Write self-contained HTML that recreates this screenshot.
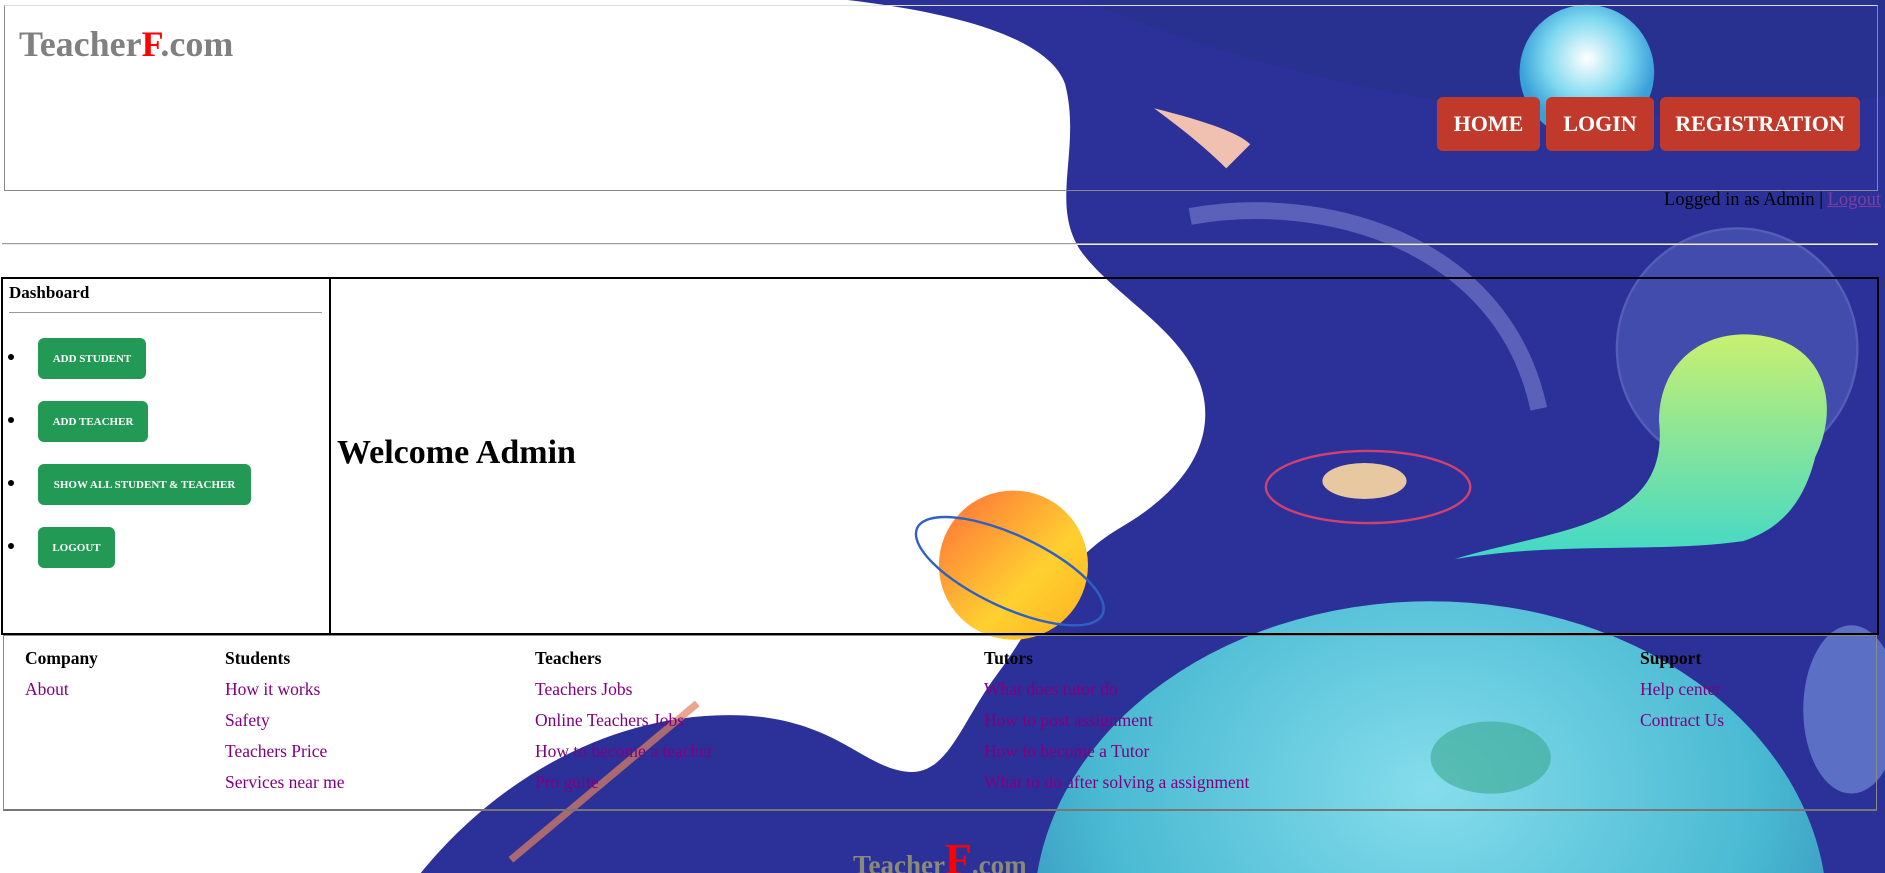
<!DOCTYPE html>
<html><head><meta charset="utf-8"><style>
*{box-sizing:border-box}
html,body{margin:0;width:1885px;height:873px;overflow:hidden}
body{position:relative;font-family:"Liberation Serif",serif;background:#fff}
#bg{position:absolute;left:0;top:0;width:1885px;height:873px;z-index:0}
.a{position:absolute;z-index:1}
.hdr{left:4px;top:5px;width:1874px;height:186px;border:1px solid #8a8a8a;border-top-color:#ddd}
.logo{left:19px;top:23px;font-size:36px;font-weight:bold;color:#808080;white-space:nowrap}
.logo span{color:#f00}
.nb{top:97px;height:54px;background:#c0392b;color:#fff;font-weight:bold;font-size:22px;border-radius:6px;display:flex;align-items:center;justify-content:center}
.logged{right:4px;top:190px;font-size:18.5px;color:#000}
.logged a{color:#7a3fa0;text-decoration:underline}
.hr{left:2px;width:1876px;top:243px;height:2px;border-top:1px solid #9a9a9a;border-bottom:1px solid #eee}
.tbl{left:1px;top:277px;width:1878px;height:358px;border:2px solid #000}
.div{left:329px;top:277px;width:2px;height:358px;background:#000}
.dash{left:9px;top:283px;font-size:17px;font-weight:bold}
.dhr{left:9px;top:312px;width:313px;height:1px;background:#999}
.gb{left:38px;height:41px;background:#229954;color:#fff;font-weight:bold;font-size:11px;border-radius:6px;display:flex;align-items:center;justify-content:center}
.dot{left:8px;width:6px;height:6px;border-radius:50%;background:#000}
.wel{left:337px;top:434px;font-size:34px;font-weight:bold}
.ft{left:3px;top:635px;width:1874px;height:176px;border:1px solid #8a8a8a;border-bottom:2px solid #777}
.fc{font-size:17.5px;line-height:31px;color:#800080}
.fc b{color:#000;display:block}
.bl{left:853px;top:838px;font-size:27px;font-weight:bold;color:#8a8a7a;white-space:nowrap;line-height:1}
.bl span{color:#f00;font-size:44px}
</style></head><body>
<svg id="bg" viewBox="0 0 1568 726" preserveAspectRatio="none">
<defs>
<radialGradient id="moon" cx="50%" cy="40%" r="50%"><stop offset="0" stop-color="#fff"/><stop offset="0.6" stop-color="#7fd9f0"/><stop offset="1" stop-color="#3aa0d8"/></radialGradient>
<radialGradient id="pl" cx="50%" cy="30%" r="70%"><stop offset="0" stop-color="#8ff0f5"/><stop offset="0.6" stop-color="#4cc8d8"/><stop offset="1" stop-color="#2a7fb0"/></radialGradient>
<linearGradient id="or" x1="0" y1="0" x2="1" y2="1"><stop offset="0" stop-color="#ff6a3a"/><stop offset="0.6" stop-color="#ffd030"/><stop offset="1" stop-color="#ffb020"/></linearGradient>
<linearGradient id="gh" x1="0" y1="0" x2="0" y2="1"><stop offset="0" stop-color="#c8f070"/><stop offset="1" stop-color="#40d8c8"/></linearGradient>
</defs>
<path d="M705,0 C790,10 872,30 886,70 C900,125 872,170 900,210 C930,250 995,280 1002,335 C1008,385 965,420 930,440 C880,470 860,520 830,560 C800,600 790,640 760,642 C720,642 700,600 620,595 C520,590 420,640 350,726 L1568,726 L1568,0 Z" fill="#2c3199"/>
<path d="M900,0 C1100,80 1300,120 1568,80 L1568,0 Z" fill="#26308a" opacity="0.6"/>
<circle cx="1320" cy="60" r="56" fill="url(#moon)"/>
<ellipse cx="1190" cy="760" rx="330" ry="260" fill="url(#pl)" opacity="0.9"/>
<ellipse cx="1240" cy="630" rx="50" ry="30" fill="#3aa890" opacity="0.6"/>
<circle cx="843" cy="470" r="62" fill="url(#or)"/>
<ellipse cx="840" cy="475" rx="85" ry="30" fill="none" stroke="#3060c0" stroke-width="2" transform="rotate(25 840 475)"/>
<ellipse cx="1138" cy="405" rx="85" ry="30" fill="none" stroke="#d04070" stroke-width="2"/>
<ellipse cx="1135" cy="400" rx="35" ry="15" fill="#e8c8a0"/>
<circle cx="1445" cy="290" r="100" fill="#6a80d0" opacity="0.35" stroke="#a0b0f0" stroke-width="2"/>
<path d="M1380,350 C1380,300 1420,270 1470,280 C1520,290 1530,340 1510,380 C1500,420 1480,440 1450,450 C1380,460 1300,450 1210,465 C1290,440 1390,440 1380,350 Z" fill="url(#gh)"/>
<path d="M960,90 C1000,100 1030,110 1040,120 L1020,140 C1000,120 980,105 960,90 Z" fill="#f0c0b0"/>
<path d="M990,180 C1100,160 1250,200 1280,340" fill="none" stroke="#8a90d8" stroke-width="14" opacity="0.5"/>
<path d="M425,715 L580,585" stroke="#e08060" stroke-width="6" opacity="0.7"/>
<ellipse cx="1540" cy="590" rx="40" ry="70" fill="#8ab0f0" opacity="0.5"/>
</svg>
<div class="a hdr"></div>
<div class="a logo">Teacher<span>F</span>.com</div>
<div class="a nb" style="left:1437px;width:103px">HOME</div>
<div class="a nb" style="left:1546px;width:108px">LOGIN</div>
<div class="a nb" style="left:1660px;width:200px">REGISTRATION</div>
<div class="a logged">Logged in as Admin | <a>Logout</a></div>
<div class="a hr"></div>
<div class="a tbl"></div>
<div class="a div"></div>
<div class="a dash">Dashboard</div>
<div class="a dhr"></div>
<div class="a dot" style="top:354px"></div><div class="a gb" style="top:338px;width:108px">ADD STUDENT</div>
<div class="a dot" style="top:417px"></div><div class="a gb" style="top:401px;width:110px">ADD TEACHER</div>
<div class="a dot" style="top:480px"></div><div class="a gb" style="top:464px;width:213px">SHOW ALL STUDENT &amp; TEACHER</div>
<div class="a dot" style="top:543px"></div><div class="a gb" style="top:527px;width:77px">LOGOUT</div>
<div class="a wel">Welcome Admin</div>
<div class="a ft"></div>
<div class="a fc" style="left:25px;top:643px"><b>Company</b>About</div>
<div class="a fc" style="left:225px;top:643px"><b>Students</b>How it works<br>Safety<br>Teachers Price<br>Services near me</div>
<div class="a fc" style="left:535px;top:643px"><b>Teachers</b>Teachers Jobs<br>Online Teachers Jobs<br>How to become a teacher<br>Pro guite</div>
<div class="a fc" style="left:984px;top:643px"><b>Tutors</b>What does tutor do<br>How to post assignment<br>How to become a Tutor<br>What to do after solving a assignment</div>
<div class="a fc" style="left:1640px;top:643px"><b>Support</b>Help center<br>Contract Us</div>
<div class="a bl">Teacher<span>F</span>.com</div>
</body></html>
